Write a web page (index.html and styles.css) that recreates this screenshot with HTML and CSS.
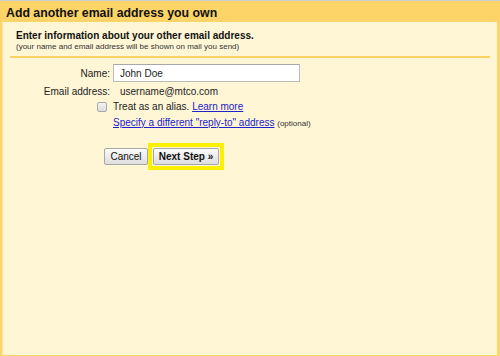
FILE: index.html
```html
<!DOCTYPE html>
<html lang="en">
<head>
  <meta charset="UTF-8" />
  <title>Add another email address you own</title>
  <link rel="stylesheet" href="styles.css">
</head>
<body>
  <div class="frame">
    <h2 class="title">Add another email address you own</h2>

    <div class="panel">
      <!-- intro -->
      <div class="intro">
        <h3>Enter information about your other email address.</h3>
        <p class="note">(your name and email address will be shown on mail you send)</p>
      </div>
      <div class="rule"></div>

      <!-- form rows -->
      <div class="row row-name">
        <label class="lbl" for="name">Name:</label>
        <input type="text" id="name" value="John Doe" />
      </div>

      <div class="row row-email">
        <span class="lbl">Email address:</span>
        <span class="value">username@mtco.com</span>
      </div>

      <div class="row row-alias">
        <span class="lbl"><input type="checkbox" id="alias" class="check" /></span>
        <span><label for="alias">Treat as an alias.</label> <a href="#">Learn more</a></span>
      </div>

      <div class="row row-reply">
        <span class="lbl"></span>
        <span><a href="#">Specify a different "reply-to" address</a> <span class="opt">(optional)</span></span>
      </div>

      <div class="actions">
        <button class="btn btn-cancel">Cancel</button>
        <span class="highlight"><button class="btn btn-next">Next Step »</button></span>
      </div>
    </div>
  </div>
</body>
</html>
```

FILE: styles.css
```css
html, body {
  margin: 0;
  padding: 0;
}
body {
  font-family: "Liberation Sans", Arial, sans-serif;
  font-size: 10px;
  color: #222;
}
.frame {
  height: 356px;
  box-sizing: border-box;
  border-top: 1px solid #c9ccd2;
  background: #fcd467;
  padding: 0 3px 1px 2px;
  display: flex;
  flex-direction: column;
}
.title {
  margin: 0;
  height: 21px;
  box-sizing: border-box;
  padding: 3px 0 0 4px;
  font-size: 12.3px;
  line-height: 18px;
  font-weight: bold;
  color: #111;
}
.panel {
  flex: 1;
  background: #fff6d6;
  border-left: 1px solid #fde8a8;
  padding: 8px 7px 0 7px;
}
.intro {
  padding-left: 6px;
}
.intro h3 {
  margin: 0;
  font-size: 10px;
  line-height: 12px;
  font-weight: bold;
  color: #111;
}
.note {
  margin: 0;
  font-size: 8px;
  line-height: 10px;
  color: #333;
}
.rule {
  height: 2px;
  background: #fad163;
  margin-top: 4px;
}
.row {
  display: grid;
  grid-template-columns: 100px 1fr;
  column-gap: 3px;
  align-items: center;
}
.lbl {
  text-align: right;
}
.row-name {
  margin-top: 6px;
  height: 18px;
}
.row-name input {
  width: 187px;
  height: 18px;
  box-sizing: border-box;
  border: 1px solid #bbb;
  border-top-color: #a8a8a8;
  padding: 0 6px;
  font-family: inherit;
  font-size: 10px;
  color: #222;
  background: #fff;
  margin: 0;
}
.row-email {
  margin-top: 1px;
  height: 16px;
}
.value {
  padding-left: 7px;
}
.row-alias {
  height: 14px;
}
.check {
  appearance: none;
  -webkit-appearance: none;
  width: 10px;
  height: 10px;
  margin: 0 3px 0 0;
  border: 1px solid #a9a9a9;
  border-radius: 2px;
  background: linear-gradient(#f4f4f4, #dcdcdc);
  vertical-align: middle;
}
.row-reply {
  margin-top: 2px;
  height: 14px;
}
a {
  color: #2222cc;
  text-decoration: underline;
}
.opt {
  font-size: 8px;
  color: #333;
}
.actions {
  margin: 14px 0 0 94px;
  display: flex;
  align-items: center;
}
.btn {
  height: 17px;
  box-sizing: border-box;
  margin: 0;
  padding: 0;
  font-family: inherit;
  font-size: 10px;
  color: #111;
  border: 1px solid #a8a8a8;
  border-radius: 2px;
  background: linear-gradient(#fbfbfb, #dedede);
}
.btn-cancel {
  width: 44px;
}
.highlight {
  display: inline-flex;
  border: 4px solid #fbf000;
  padding: 1px;
}
.btn-next {
  width: 66px;
  font-weight: bold;
}
```
